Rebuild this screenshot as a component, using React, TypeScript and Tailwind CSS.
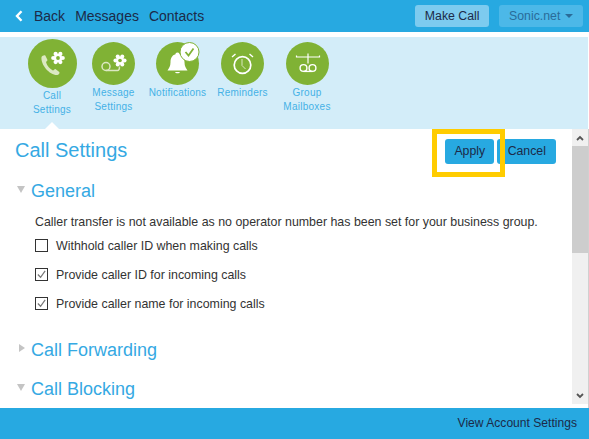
import React from "react";

const Gear = ({ x, y, r }: { x: number; y: number; r: number }) => (
  <g transform={`translate(${x} ${y})`} fill="#fff">
    {[0, 60, 120, 180, 240, 300].map((a) => (
      <circle key={a} cx={r * 0.95 * Math.cos((a * Math.PI) / 180)} cy={r * 0.95 * Math.sin((a * Math.PI) / 180)} r={r * 0.42} />
    ))}
    <circle r={r * 0.85} />
    <circle r={r * 0.38} fill="#80b235" />
  </g>
);

const CallIcon = () => (
  <svg viewBox="0 0 49 49" className="w-[49px] h-[49px]">
    <circle cx="24.5" cy="24.5" r="24.5" fill="#80b235" />
    <path d="M13.500 18c.8-1.300 2.800-2.200 3.800-1.500l2.200 4.500c.2.700-1.500 1.500-1.400 2.400 1 3.200 3.800 6.600 6.800 8 .9.100 1.700-1.600 2.500-1.300l3.900 2.800c.7.900-.3 2.800-1.800 3.100-7.500.6-17-10-16-18z" fill="#dbe8c2" />
    <Gear x={30} y={19} r={5} />
  </svg>
);

const MessageIcon = () => (
  <svg viewBox="0 0 43 43" className="w-[43px] h-[43px]">
    <circle cx="21.5" cy="21.5" r="21.500" fill="#80b235" />
    <g fill="none" stroke="#dbe8c2" strokeWidth="1.500">
      <circle cx="14" cy="24.500" r="4" />
      <path d="M14 28.500h11.500c2 0 2-2 2-4" />
    </g>
    <Gear x={28} y={18.500} r={4.800} />
  </svg>
);

const BellIcon = () => (
  <svg viewBox="0 0 43 43" className="w-[43px] h-[43px] overflow-visible">
    <circle cx="21.5" cy="21.5" r="21.500" fill="#80b235" />
    <path d="M21.500 10.500c1.500 0 2 1 2 1.800 3.500 1 5 4 5 8 0 4 1.500 6 3 8.200h-20c1.500-2.200 3-4.200 3-8.200 0-4 1.500-7 5-8 0-.8.500-1.800 2-1.800z" fill="#fff" />
    <path d="M19 30h5c-.5 1.800-4.500 1.800-5 0z" fill="#fff" />
    <circle cx="33.500" cy="10" r="9.500" fill="#fff" stroke="#80b235" strokeWidth="1" />
    <path d="M29.500 10l3 3.500 5-7" fill="none" stroke="#80b235" strokeWidth="1.800" />
  </svg>
);

const ClockIcon = () => (
  <svg viewBox="0 0 43 43" className="w-[43px] h-[43px]">
    <circle cx="21.5" cy="21.5" r="21.500" fill="#80b235" />
    <g fill="none" stroke="#fff">
      <circle cx="21.500" cy="23" r="8.300" strokeWidth="1.700" />
      <path d="M21 17v6.500l3.500 3.500" strokeWidth="1" stroke="#dbe8c2" />
      <path d="M11 15l3.500-3M32 15l-3.500-3" strokeWidth="1.400" />
    </g>
  </svg>
);

const GroupIcon = () => (
  <svg viewBox="0 0 43 43" className="w-[43px] h-[43px]">
    <circle cx="21.5" cy="21.5" r="21.500" fill="#80b235" />
    <g fill="none" stroke="#fff" strokeWidth="1.200">
      <path d="M10.500 13.500v1.500h23v-1.500M22 11.500v10" />
      <circle cx="17.500" cy="26" r="3.400" strokeWidth="1.400" />
      <circle cx="26.500" cy="26" r="3.400" strokeWidth="1.400" />
      <path d="M17.500 29.400h9" strokeWidth="1.400" />
    </g>
  </svg>
);

const NavItem = ({ icon, label, w, pt }: { icon: React.ReactNode; label: string[]; w: string; pt: string }) => (
  <div className={`flex flex-col items-center shrink-0 ${w} ${pt}`}>
    {icon}
    <div className="mt-[1px] text-center text-[10px] leading-[14px] tracking-[0.25px] text-[#45b1e6] whitespace-nowrap">
      {label.map((l) => (
        <div key={l}>{l}</div>
      ))}
    </div>
  </div>
);

const Check = ({ checked, label }: { checked?: boolean; label: string }) => (
  <div className="flex items-center h-[29px] gap-[8px]">
    <span className="w-[13px] h-[13px] border border-[#333] bg-white flex items-center justify-center -mt-[3px]">
      {checked && (
        <svg viewBox="0 0 12 12" className="w-[11px] h-[11px]">
          <path d="M2 6l3 3 5-7" fill="none" stroke="#777" strokeWidth="1.300" />
        </svg>
      )}
    </span>
    <span className="text-[12.4px] text-[#333]">{label}</span>
  </div>
);

const Section = ({ open, label, mt }: { open?: boolean; label: string; mt: string }) => (
  <div className={`flex items-center h-[24px] ${mt}`}>
    <span className="w-[16px] flex justify-center -mt-[4px]">
      {open ? (
        <span className="w-0 h-0 mr-[4px] border-l-[4.5px] border-r-[4.5px] border-t-[7px] border-l-transparent border-r-transparent border-t-[#c4c4c4]" />
      ) : (
        <span className="w-0 h-0 mr-[3px] border-t-[4.5px] border-b-[4.5px] border-l-[6px] border-t-transparent border-b-transparent border-l-[#c4c4c4]" />
      )}
    </span>
    <span className="text-[18px] text-[#35a9e3]">{label}</span>
  </div>
);

export default function App() {
  return (
    <div className="relative w-[589px] h-[439px] bg-white flex flex-col overflow-hidden font-['Liberation_Sans',Arial,sans-serif]">
      <header className="h-[32px] bg-[#27a9e1] flex items-center shrink-0 text-[#1c2a48]">
        <svg viewBox="0 0 8 12" className="w-[8px] h-[12px] ml-[15px] mr-[11px]">
          <path d="M6.500 1.200L2 6l4.500 4.800" fill="none" stroke="#fff" strokeWidth="2.400" />
        </svg>
        <span className="text-[14px] mt-[1px]">Back</span>
        <span className="text-[14px] ml-[10px]">Messages</span>
        <span className="text-[14px] ml-[10px]">Contacts</span>
        <button className="ml-[211px] w-[74px] h-[22px] rounded-[3px] bg-[#7dcbef] text-[12.3px]">Make Call</button>
        <button className="ml-[10px] w-[84px] h-[22px] rounded-[3px] bg-[#4cb8e8] text-[12.3px] text-[#2a6c99] flex items-center justify-center gap-[5px]">
          Sonic.net
          <span className="w-0 h-0 border-l-[4px] border-r-[4px] border-t-[4px] border-l-transparent border-r-transparent border-t-[#2a6c99]" />
        </button>
      </header>
      <nav className="h-[92px] mt-[5px] mr-[1px] bg-[#d3edf9] shrink-0 relative flex items-start pl-[21px] pt-[2px]">
        <NavItem icon={<CallIcon />} label={["Call", "Settings"]} w="w-[62px]" pt="pt-0" />
        <NavItem icon={<MessageIcon />} label={["Message", "Settings"]} w="w-[61px]" pt="pt-[3px]" />
        <NavItem icon={<BellIcon />} label={["Notifications"]} w="w-[67px]" pt="pt-[3px]" />
        <NavItem icon={<ClockIcon />} label={["Reminders"]} w="w-[63px]" pt="pt-[3px]" />
        <NavItem icon={<GroupIcon />} label={["Group", "Mailboxes"]} w="w-[66px]" pt="pt-[3px]" />
        <span className="absolute left-[45px] bottom-0 w-0 h-0 border-l-[7px] border-r-[7px] border-b-[7px] border-l-transparent border-r-transparent border-b-white" />
      </nav>
      <main className="flex-1 flex min-h-0">
        <div className="flex-1 min-w-0 overflow-hidden">
          <div className="flex items-center h-[43px] pl-[15px]">
            <h1 className="text-[20px] text-[#35a9e3] -mt-[1px]">Call Settings</h1>
            <button className="ml-[318px] mt-[1px] w-[49px] h-[25px] rounded-[3px] bg-[#27a9e1] text-[12.3px] text-[#1c2a48]">Apply</button>
            <button className="ml-[3px] mt-[1px] w-[59px] h-[25px] rounded-[3px] bg-[#27a9e1] text-[12.3px] text-[#1c2a48]">Cancel</button>
          </div>
          <div className="pl-[15px]">
            <Section open label="General" mt="mt-[7px]" />
            <p className="ml-[20px] mt-[11px] text-[12.4px] leading-[16px] text-[#333] whitespace-nowrap">
              Caller transfer is not available as no operator number has been set for your business group.
            </p>
            <div className="ml-[20px] mt-[2px]">
              <Check label="Withhold caller ID when making calls" />
              <Check checked label="Provide caller ID for incoming calls" />
              <Check checked label="Provide caller name for incoming calls" />
            </div>
            <Section label="Call Forwarding" mt="mt-[19px]" />
            <Section open label="Call Blocking" mt="mt-[15px]" />
          </div>
        </div>
        <div className="w-[17px] border-r border-[#d0d0d0] flex flex-col shrink-0">
          <div className="flex-1 mb-[4px] bg-[#f0f0f0] flex flex-col">
            <div className="h-[17px] flex items-center justify-center">
              <svg viewBox="0 0 8 6" className="w-[8px] h-[6px]">
                <path d="M1 5l3-3 3 3" fill="none" stroke="#555" strokeWidth="1.800" />
              </svg>
            </div>
            <div className="h-[107px] bg-[#cdcdcd]" />
            <div className="flex-1" />
            <div className="h-[17px] flex items-center justify-center">
              <svg viewBox="0 0 8 6" className="w-[8px] h-[6px]">
                <path d="M1 1l3 3 3-3" fill="none" stroke="#555" strokeWidth="1.800" />
              </svg>
            </div>
          </div>
        </div>
      </main>
      <footer className="h-[31px] bg-[#27a9e1] shrink-0 flex items-center justify-end pr-[12px] pb-[1px] text-[12.1px] text-[#1c2a48]">
        View Account Settings
      </footer>
      <div className="absolute left-[432px] top-[129px] w-[73px] h-[48px] border-[5px] border-[#ffcc00] pointer-events-none" />
    </div>
  );
}
